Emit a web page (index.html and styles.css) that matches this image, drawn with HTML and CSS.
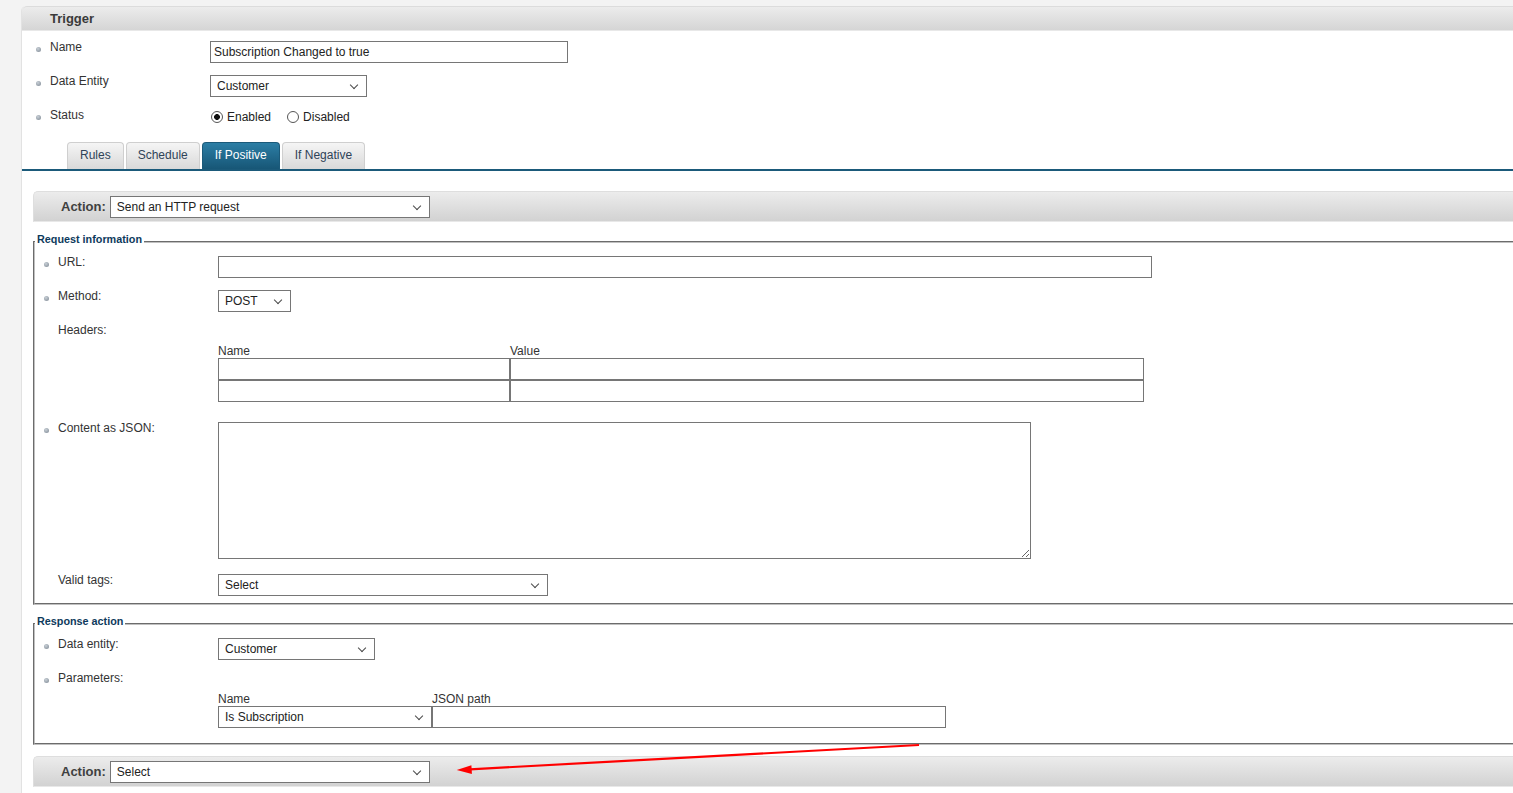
FILE: index.html
```html
<!DOCTYPE html>
<html lang="en">
<head>
  <meta charset="UTF-8" />
  <meta name="viewport" content="width=device-width, initial-scale=1.0" />
  <title>Trigger</title>
  <link rel="stylesheet" href="styles.css">
</head>
<body>

  <div class="page">
    <div class="box">
      <div class="box-header">Trigger</div>

      <!-- trigger properties -->
      <div class="trigger-fields">
        <div class="row">
          <span class="bullet"></span>
          <label class="label">Name</label>
          <div class="field"><input class="text w-name" type="text" value="Subscription Changed to true"></div>
        </div>
        <div class="row">
          <span class="bullet"></span>
          <label class="label">Data Entity</label>
          <div class="field"><span class="sel-wrap w-entity"><select class="sel"><option>Customer</option></select></span></div>
        </div>
        <div class="row">
          <span class="bullet"></span>
          <label class="label">Status</label>
          <div class="radios">
            <label class="radio-opt"><input class="radio" type="radio" name="status" checked>Enabled</label>
            <label class="radio-opt"><input class="radio" type="radio" name="status">Disabled</label>
          </div>
        </div>
      </div>

      <div class="tabs">
        <div class="tab">Rules</div>
        <div class="tab tab-narrow">Schedule</div>
        <div class="tab active">If Positive</div>
        <div class="tab">If Negative</div>
      </div>

      <!-- first action -->
      <div class="action-panel">
        <div class="action-bar">
          <span class="action-label">Action:</span>
          <span class="sel-wrap w-action"><select class="sel"><option>Send an HTTP request</option></select></span>
        </div>

        <fieldset class="group group-request">
          <legend>Request information</legend>
          <div class="row">
            <span class="bullet"></span>
            <label class="label">URL:</label>
            <div class="field"><input class="text w-url" type="text"></div>
          </div>
          <div class="row">
            <span class="bullet"></span>
            <label class="label">Method:</label>
            <div class="field"><span class="sel-wrap w-method"><select class="sel"><option>POST</option></select></span></div>
          </div>
          <div class="row row-table">
            <span class="bullet none"></span>
            <label class="label">Headers:</label>
            <div class="field field-table">
              <div class="grid grid-headers">
                <span class="grid-head">Name</span>
                <span class="grid-head">Value</span>
                <input class="text" type="text">
                <input class="text" type="text">
                <input class="text" type="text">
                <input class="text" type="text">
              </div>
            </div>
          </div>
          <div class="row row-textarea">
            <span class="bullet"></span>
            <label class="label">Content as JSON:</label>
            <div class="field"><textarea class="json"></textarea></div>
          </div>
          <div class="row">
            <span class="bullet none"></span>
            <label class="label">Valid tags:</label>
            <div class="field"><span class="sel-wrap w-tags"><select class="sel"><option>Select</option></select></span></div>
          </div>
        </fieldset>

        <fieldset class="group group-response">
          <legend>Response action</legend>
          <div class="row">
            <span class="bullet"></span>
            <label class="label">Data entity:</label>
            <div class="field"><span class="sel-wrap w-entity"><select class="sel"><option>Customer</option></select></span></div>
          </div>
          <div class="row">
            <span class="bullet"></span>
            <label class="label">Parameters:</label>
            <div class="field field-table">
              <div class="grid grid-params">
                <span class="grid-head">Name</span>
                <span class="grid-head">JSON path</span>
                <span class="sel-wrap"><select class="sel"><option>Is Subscription</option></select></span>
                <input class="text" type="text">
              </div>
            </div>
          </div>
        </fieldset>
      </div>

      <!-- next action -->
      <div class="action-panel next">
        <div class="action-bar">
          <span class="action-label">Action:</span>
          <span class="sel-wrap w-action"><select class="sel"><option>Select</option></select></span>
        </div>
      </div>
    </div>
  </div>

  <!-- annotation arrow -->
  <svg class="annotation" width="1513" height="793" viewBox="0 0 1513 793">
    <line x1="919" y1="745" x2="470" y2="769.3" stroke="#f00" stroke-width="2.2" />
    <polygon points="456.7,770 471.9,774 471.4,765.2" fill="#f00" />
  </svg>

</body>
</html>
```

FILE: styles.css
```css
* { box-sizing: border-box; }

html, body {
  overflow: hidden;
}

body {
  margin: 0;
  background: #f3f3f3;
  font-family: "Liberation Sans", Arial, sans-serif;
  font-size: 12px;
  color: #333;
}

.page {
  padding: 6px 0 0 21px;
}

.box {
  background: #fff;
  border-left: 1px solid #e2e2e2;
  border-top-left-radius: 5px;
  margin-right: -40px;
  min-height: 900px;
}

.box-header {
  height: 25px;
  line-height: 23px;
  padding-left: 28px;
  font-size: 13px;
  font-weight: bold;
  color: #3a3a3a;
  background: linear-gradient(#ececec, #d5d5d5);
  border-top: 1px solid #dcdcdc;
  border-bottom: 1px solid #e8e8e8;
  border-top-left-radius: 5px;
}

/* ROWS */
.trigger-fields {
  padding: 9px 0 16px 14px;
}

.row {
  display: flex;
  align-items: flex-start;
  margin-bottom: 11px;
}

.row:last-child {
  margin-bottom: 0;
}

.bullet {
  flex: 0 0 5px;
  width: 5px;
  height: 5px;
  margin: 7px 9px 0 0;
  border-radius: 50%;
  background: radial-gradient(circle at 40% 35%, #c9d0d7, #7b8691);
}

.bullet.none {
  visibility: hidden;
}

.label {
  flex: 0 0 160px;
  line-height: 14px;
  color: #333;
}

.field {
  margin-top: 1px;
}

.text,
.sel {
  display: block;
  height: 22px;
  margin: 0;
  border: 1px solid #767676;
  border-radius: 0;
  background: #fff;
  font-family: "Liberation Sans", Arial, sans-serif;
  font-size: 12px;
  color: #222;
}

.text {
  padding: 0 3px;
}

/* select with a thin chevron */
.sel-wrap {
  position: relative;
  display: block;
}

.sel {
  width: 100%;
  padding: 0 20px 0 6px;
  appearance: none;
  -webkit-appearance: none;
}

.sel-wrap::after {
  content: "";
  position: absolute;
  top: 7px;
  right: 10px;
  width: 5px;
  height: 5px;
  border-right: 1px solid #4a4a4a;
  border-bottom: 1px solid #4a4a4a;
  transform: rotate(45deg);
  pointer-events: none;
}

.w-name { width: 358px; }
.w-entity { width: 157px; }
.w-action { width: 320px; }
.w-url { width: 934px; }
.w-method { width: 73px; }
.w-tags { width: 330px; }

/* RADIOS */
.radios {
  display: flex;
  align-items: center;
  height: 18px;
}

.radio-opt {
  display: flex;
  align-items: center;
  gap: 4px;
  margin-right: 15px;
  color: #222;
}

.radio {
  appearance: none;
  -webkit-appearance: none;
  width: 12px;
  height: 12px;
  margin: 0 0 0 1px;
  border: 1px solid #555;
  border-radius: 50%;
  background: #fff;
}

.radio:checked {
  background: radial-gradient(circle, #111 0 2.6px, #fff 3.2px);
}

/* TABS */
.tabs {
  display: flex;
  align-items: flex-end;
  gap: 2px;
  height: 29px;
  padding-left: 45px;
  border-bottom: 2px solid #1b5a7a;
}

.tab {
  height: 27px;
  padding: 0 12px 2px;
  line-height: 24px;
  border: 1px solid #cfcfcf;
  border-bottom: none;
  border-radius: 4px 4px 0 0;
  background: linear-gradient(#f5f5f5, #d9d9d9);
  color: #2f4358;
}

.tab-narrow {
  padding: 0 11px 2px;
}

.tab.active {
  background: linear-gradient(#2c7ea5, #175676);
  border-color: #1b5a7a;
  color: #fff;
}

/* ACTION PANELS */
.action-panel {
  margin: 20px 0 0 11px;
}

.action-panel.next {
  margin-top: 11px;
}

.action-bar {
  display: flex;
  align-items: center;
  height: 31px;
  padding-left: 27px;
  background: linear-gradient(#ececec, #d2d2d2);
  border-top: 1px solid #dedede;
  border-left: 1px solid #dedede;
  border-bottom: 1px solid #e8e8e8;
  border-top-left-radius: 5px;
}

.action-label {
  margin-right: 4px;
  font-size: 13px;
  font-weight: bold;
  color: #404040;
}

/* FIELDSETS */
.group {
  margin: 11px 0 0;
  padding: 4px 0 7px;
  border: 2px groove #c0c0c0;
  min-width: 0;
}

.group .row {
  padding-left: 9px;
}

.group legend {
  margin: 0;
  padding: 0 2px 6px;
  line-height: 12px;
  font-size: 10.8px;
  font-weight: bold;
  color: #0e3a5c;
}

.group-response {
  margin-top: 10px;
  padding-bottom: 15px;
}

.row-table {
  margin-bottom: 19px;
}

.row-textarea {
  margin-bottom: 14px;
}

.field-table {
  padding-top: 20px;
}

.grid {
  display: grid;
}

.grid-headers {
  grid-template-columns: 292px 634px;
}

.grid-params {
  grid-template-columns: 214px 514px;
}

.grid-head {
  line-height: 14px;
  color: #333;
}

.grid .text {
  width: 100%;
}

.json {
  display: block;
  width: 813px;
  height: 137px;
  margin: 0;
  border: 1px solid #767676;
  border-radius: 0;
  font-family: "Liberation Sans", Arial, sans-serif;
  font-size: 12px;
}

/* ANNOTATION */
.annotation {
  position: absolute;
  top: 0;
  left: 0;
  pointer-events: none;
}
```
